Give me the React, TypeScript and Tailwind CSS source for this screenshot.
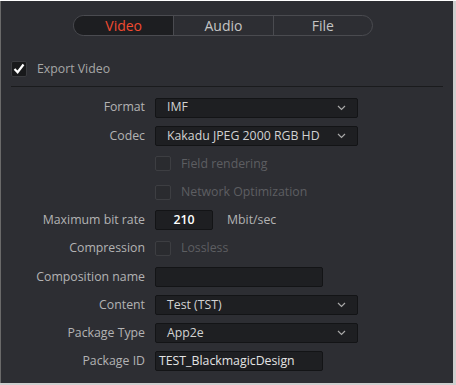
import React from 'react';

const font = { fontFamily: '"Open Sans", "Liberation Sans", sans-serif' };

function Chevron() {
  return (
    <svg width="9" height="6" viewBox="0 0 9 6" className="shrink-0">
      <path d="M1 1 L4.5 4.5 L8 1" fill="none" stroke="#a8a8a8" strokeWidth="1.2" />
    </svg>
  );
}

function Dropdown({ value }: { value: string }) {
  return (
    <div className="flex h-[20px] w-[203px] items-center justify-between rounded-[2px] border border-[#131416] bg-[#1e1f22] pl-[11px] pr-[11px] text-[12.3px] text-[#d2d2d2]">
      <span>{value}</span>
      <Chevron />
    </div>
  );
}

function TextBox({ value, width, center }: { value: string; width: string; center?: boolean }) {
  return (
    <div
      className={`flex h-[20px] ${width} items-center rounded-[2px] border border-[#131416] bg-[#1e1f22] text-[12.3px] text-[#e4e4e4] ${center ? 'justify-center font-semibold text-white' : 'pl-[3px]'}`}
    >
      {value}
    </div>
  );
}

function Box({ checked }: { checked?: boolean }) {
  if (checked) {
    return (
      <div className="flex h-[16px] w-[16px] items-center justify-center rounded-[2px] border border-[#3a3b3f] bg-[#18191b]">
        <svg width="12" height="11" viewBox="0 0 12 11">
          <path d="M1.5 6 L4.6 9.2 L10.5 1.5" fill="none" stroke="#ffffff" strokeWidth="2.2" />
        </svg>
      </div>
    );
  }
  return <div className="h-[15px] w-[16px] rounded-[2px] border border-[#3d3e42] bg-[#2a2b2f]" />;
}

function Row({ label, children }: { label?: string; children: React.ReactNode }) {
  return (
    <div className="flex h-[28.2px] items-center">
      <div className="w-[144px] text-right text-[12.3px] text-[#b3b3b3]">{label}</div>
      <div className="ml-[10px] flex items-center">{children}</div>
    </div>
  );
}

export default function App() {
  return (
    <div className="h-[385px] w-[456px] bg-[#cfcfcf]" style={font}>
      <div className="mt-[1px] h-[382px] w-[453px] border-l border-[#6a6a6a] bg-[#2d2e33]">
        <div className="flex justify-center pt-[14px]">
          <div className="ml-[-8px] flex h-[21px] w-[300px] overflow-hidden rounded-full border border-[#4a4b50] text-[14px]">
            <div className="flex w-[100px] items-center justify-center bg-[#1d1e21] text-[#f04a30]">Video</div>
            <div className="flex w-[100px] items-center justify-center border-l border-[#4a4b50] text-[#c4c4c4]">Audio</div>
            <div className="flex w-[100px] items-center justify-center border-l border-[#4a4b50] text-[#c4c4c4]">File</div>
          </div>
        </div>

        <div className="mt-[23px] flex h-[19.5px] items-center pl-[10px]">
          <Box checked />
          <span className="ml-[10px] text-[12.3px] text-[#a6a6a6]">Export Video</span>
        </div>

        <div className="mx-[10px] mt-[7px] h-px bg-[#1a1b1d]" />

        <div className="mt-[7px]">
          <Row label="Format">
            <Dropdown value="IMF" />
          </Row>
          <Row label="Codec">
            <Dropdown value="Kakadu JPEG 2000 RGB HD" />
          </Row>
          <Row>
            <Box />
            <span className="ml-[10px] text-[12.3px] text-[#5d5e62]">Field rendering</span>
          </Row>
          <Row>
            <Box />
            <span className="ml-[10px] text-[12.3px] text-[#5d5e62]">Network Optimization</span>
          </Row>
          <Row label="Maximum bit rate">
            <TextBox value="210" width="w-[58px]" center />
            <span className="ml-[14px] text-[12.3px] text-[#b3b3b3]">Mbit/sec</span>
          </Row>
          <Row label="Compression">
            <Box />
            <span className="ml-[10px] text-[12.3px] text-[#5d5e62]">Lossless</span>
          </Row>
          <Row label="Composition name">
            <TextBox value="" width="w-[168px]" />
          </Row>
          <Row label="Content">
            <Dropdown value="Test (TST)" />
          </Row>
          <Row label="Package Type">
            <Dropdown value="App2e" />
          </Row>
          <Row label="Package ID">
            <TextBox value="TEST_BlackmagicDesign" width="w-[168px]" />
          </Row>
        </div>
      </div>
    </div>
  );
}
